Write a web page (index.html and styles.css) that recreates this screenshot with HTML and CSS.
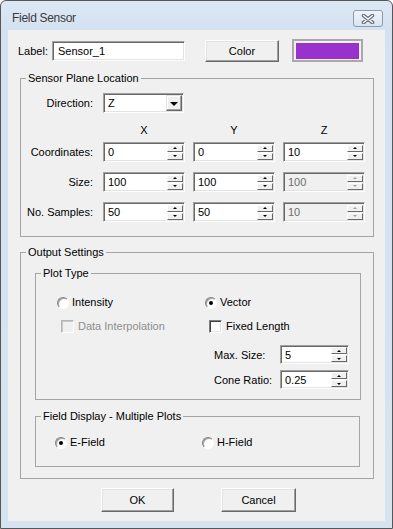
FILE: index.html
```html
<!DOCTYPE html>
<html lang="en">
<head>
  <meta charset="UTF-8" />
  <meta name="viewport" content="width=device-width, initial-scale=1.0"/>
  <title>Field Sensor</title>
  <link rel="stylesheet" href="styles.css">
</head>
<body>

<div class="window">
  <div class="titlebar">
    <span class="title">Field Sensor</span>
    <div class="close-btn">
      <svg width="14" height="10" viewBox="0 0 14 10">
        <path d="M2.5 1.5 L11.5 8.5 M11.5 1.5 L2.5 8.5" stroke="#5f6a7b" stroke-width="3.6" stroke-linecap="round"/>
        <path d="M2.5 1.5 L11.5 8.5 M11.5 1.5 L2.5 8.5" stroke="#ffffff" stroke-width="1.5" stroke-linecap="round"/>
      </svg>
    </div>
  </div>

  <div class="client">
    <div class="label-row">
      <span class="label-text">Label:</span>
      <div class="edit label-edit">Sensor_1</div>
      <div class="btn color-btn">Color</div>
      <div class="swatch"><div class="swatch-fill"></div></div>
    </div>

    <fieldset class="group plane-group">
      <legend>Sensor Plane Location</legend>

      <div class="plane-line dir-line">
        <span class="row-label">Direction:</span>
        <div class="edit combo">
          <span>Z</span>
          <div class="drop-btn"><i class="drop-arrow"></i></div>
        </div>
      </div>

      <div class="plane-line axis-line">
        <span></span>
        <span class="axis">X</span>
        <span class="axis">Y</span>
        <span class="axis">Z</span>
      </div>

      <div class="plane-line value-line first">
        <span class="row-label">Coordinates:</span>
        <div class="edit spin-edit"><span>0</span><div class="spin"><div class="spin-btn"><i class="up"></i></div><div class="spin-btn"><i class="down"></i></div></div></div>
        <div class="edit spin-edit"><span>0</span><div class="spin"><div class="spin-btn"><i class="up"></i></div><div class="spin-btn"><i class="down"></i></div></div></div>
        <div class="edit spin-edit"><span>10</span><div class="spin"><div class="spin-btn"><i class="up"></i></div><div class="spin-btn"><i class="down"></i></div></div></div>
      </div>

      <div class="plane-line value-line">
        <span class="row-label">Size:</span>
        <div class="edit spin-edit"><span>100</span><div class="spin"><div class="spin-btn"><i class="up"></i></div><div class="spin-btn"><i class="down"></i></div></div></div>
        <div class="edit spin-edit"><span>100</span><div class="spin"><div class="spin-btn"><i class="up"></i></div><div class="spin-btn"><i class="down"></i></div></div></div>
        <div class="edit spin-edit disabled"><span>100</span><div class="spin"><div class="spin-btn"><i class="up"></i></div><div class="spin-btn"><i class="down"></i></div></div></div>
      </div>

      <div class="plane-line value-line">
        <span class="row-label">No. Samples:</span>
        <div class="edit spin-edit"><span>50</span><div class="spin"><div class="spin-btn"><i class="up"></i></div><div class="spin-btn"><i class="down"></i></div></div></div>
        <div class="edit spin-edit"><span>50</span><div class="spin"><div class="spin-btn"><i class="up"></i></div><div class="spin-btn"><i class="down"></i></div></div></div>
        <div class="edit spin-edit disabled"><span>10</span><div class="spin"><div class="spin-btn"><i class="up"></i></div><div class="spin-btn"><i class="down"></i></div></div></div>
      </div>
    </fieldset>

    <fieldset class="group output-group">
      <legend>Output Settings</legend>

      <fieldset class="group plot-group">
        <legend>Plot Type</legend>
        <div class="group-body plot-body">
          <div class="choice-row">
            <label class="option"><span class="radio"></span>Intensity</label>
            <label class="option"><span class="radio checked"></span>Vector</label>
          </div>

          <div class="choice-row check-row">
            <label class="option off"><span class="check"></span>Data Interpolation</label>
            <label class="option"><span class="check"></span>Fixed Length</label>
          </div>

          <div class="param-row size-row">
            <span class="param-label">Max. Size:</span>
            <div class="edit spin-edit small"><span>5</span><div class="spin"><div class="spin-btn"><i class="up"></i></div><div class="spin-btn"><i class="down"></i></div></div></div>
          </div>

          <div class="param-row cone-row">
            <span class="param-label">Cone Ratio:</span>
            <div class="edit spin-edit small"><span>0.25</span><div class="spin"><div class="spin-btn"><i class="up"></i></div><div class="spin-btn"><i class="down"></i></div></div></div>
          </div>
        </div>
      </fieldset>

      <fieldset class="group field-group">
        <legend>Field Display - Multiple Plots</legend>
        <div class="group-body field-body">
          <div class="choice-row">
            <label class="option"><span class="radio checked"></span>E-Field</label>
            <label class="option"><span class="radio"></span>H-Field</label>
          </div>
        </div>
      </fieldset>
    </fieldset>

    <div class="actions">
      <div class="btn ok-btn">OK</div>
      <div class="btn cancel-btn">Cancel</div>
    </div>
  </div>
</div>

</body>
</html>
```

FILE: styles.css
```css
* {
  box-sizing: border-box;
}

body {
  margin: 0;
  background: #ffffff;
  font-family: "Liberation Sans", Arial, sans-serif;
  font-size: 11px;
  color: #000;
}

.window {
  width: 393px;
  height: 529px;
  border: 1px solid #575757;
  border-radius: 6px 6px 0 0;
  background: linear-gradient(#dde8f5, #d4e1f0 30px, #d6e3f1);
  display: flex;
  flex-direction: column;
}

.titlebar {
  height: 29px;
  display: flex;
  align-items: flex-start;
  justify-content: space-between;
  padding: 0 9px 0 11px;
}

.title {
  margin-top: 10px;
  font-size: 12px;
  line-height: 15px;
  letter-spacing: -0.3px;
  color: #3b3b3b;
}

.close-btn {
  width: 30px;
  height: 17px;
  margin-top: 9px;
  border: 1px solid #8c9bb0;
  border-radius: 3px;
  background: linear-gradient(#f1f5fa, #d9e3ef);
  display: flex;
  align-items: center;
  justify-content: center;
}

.client {
  margin: 0 7px;
  height: 491px;
  background: #f0f0f0;
  padding-top: 9px;
}

/* label row */

.label-row {
  display: flex;
  align-items: center;
  height: 23px;
  padding-left: 10px;
}

.label-text {
  width: 34px;
}

.edit {
  height: 20px;
  background: #fff;
  border: 1px solid;
  border-color: #a0a0a0 #fff #fff #a0a0a0;
  box-shadow: inset 1px 1px #696969, inset -1px -1px #e3e3e3;
  display: flex;
  align-items: center;
  padding-left: 4px;
}

.label-edit {
  width: 133px;
  padding-left: 5px;
}

.btn {
  height: 22px;
  background: #f0f0f0;
  border: 1px solid;
  border-color: #fff #696969 #696969 #fff;
  box-shadow: inset -1px -1px #a0a0a0, inset 1px 1px #e3e3e3;
  display: flex;
  align-items: center;
  justify-content: center;
}

.color-btn {
  width: 74px;
  margin-left: 20px;
}

.swatch {
  width: 71px;
  height: 23px;
  margin-left: 13px;
  border: 2px solid #a9a9a9;
  padding: 2px 2px 1px;
}

.swatch-fill {
  height: 100%;
  background: #9932cc;
}

/* group boxes */

.group {
  margin: 0 0 0 12px;
  padding: 0;
  width: 354px;
  min-width: 0;
  border: 1px solid #a5a5a5;
}

.group legend {
  margin-left: 5px;
  padding: 0 2px;
  line-height: 13px;
}

.plane-group {
  margin-top: 10px;
  padding-bottom: 14px;
}

.plane-line {
  display: grid;
  grid-template-columns: 74px 82px 82px 82px;
  column-gap: 8px;
  align-items: center;
}

.row-label {
  text-align: right;
  padding-right: 2px;
}

.dir-line {
  margin-top: 8px;
}

.combo {
  width: 81px;
}

.drop-btn {
  margin-left: auto;
  margin-right: 1px;
  width: 16px;
  height: 16px;
  background: #f0f0f0;
  border: 1px solid;
  border-color: #e3e3e3 #696969 #696969 #e3e3e3;
  box-shadow: inset -1px -1px #a0a0a0, inset 1px 1px #fff;
  display: flex;
  align-items: center;
  justify-content: center;
}

.drop-arrow {
  border-left: 4px solid transparent;
  border-right: 4px solid transparent;
  border-top: 4px solid #000;
  margin-top: 1px;
}

.axis-line {
  margin-top: 11px;
  line-height: 13px;
}

.axis {
  text-align: center;
}

.value-line {
  margin-top: 10px;
}

.value-line.first {
  margin-top: 5px;
}

.spin {
  margin-left: auto;
  margin-right: 1px;
  display: flex;
  flex-direction: column;
  gap: 1px;
}

.spin-btn {
  width: 16px;
  height: 7px;
  background: #f0f0f0;
  border: 1px solid;
  border-color: #fff #696969 #696969 #fff;
  display: flex;
  align-items: center;
  justify-content: center;
}

.spin-btn .up {
  border-left: 2px solid transparent;
  border-right: 2px solid transparent;
  border-bottom: 2px solid #000;
}

.spin-btn .down {
  border-left: 2px solid transparent;
  border-right: 2px solid transparent;
  border-top: 2px solid #000;
}

.edit.disabled {
  background: #f0f0f0;
  color: #6d6d6d;
}

.edit.disabled .up {
  border-bottom-color: #a0a0a0;
}

.edit.disabled .down {
  border-top-color: #a0a0a0;
}

/* output settings */

.output-group {
  margin-top: 9px;
  padding-bottom: 11px;
}

.plot-group {
  margin: 8px 0 0 14px;
  width: 326px;
}

.field-group {
  margin: 10px 0 0 14px;
  width: 325px;
}

.plot-body {
  padding: 16px 0 10px 21px;
}

.field-body {
  padding: 13px 0 17px 19px;
}

.choice-row {
  display: grid;
  grid-template-columns: 148px auto;
  align-items: center;
  height: 13px;
}

.field-body .choice-row {
  grid-template-columns: 147px auto;
}

.check-row {
  margin-top: 11px;
}

.option {
  display: flex;
  align-items: center;
  line-height: 13px;
}

.option.off {
  color: #8d8d8d;
}

.radio {
  width: 12px;
  height: 12px;
  margin-right: 3px;
  border-radius: 50%;
  border: 1px solid;
  border-color: #808080 #fff #fff #808080;
  background: #fff;
  box-shadow: inset 1px 1px #a0a0a0;
  display: flex;
  align-items: center;
  justify-content: center;
}

.radio.checked::after {
  content: "";
  width: 4px;
  height: 4px;
  border-radius: 50%;
  background: #000;
}

.check {
  width: 13px;
  height: 13px;
  margin: 0 4px 0 4px;
  border: 1px solid;
  border-color: #808080 #fff #fff #808080;
  box-shadow: inset 1px 1px #404040, inset -1px -1px #e3e3e3;
  background: #fff;
}

.option.off .check {
  border-color: #b5b5b5 #fff #fff #b5b5b5;
  box-shadow: inset 1px 1px #c8c8c8;
  background: #f0f0f0;
}

.param-row {
  display: flex;
  align-items: center;
  margin-left: 157px;
}

.param-label {
  width: 66px;
}

.size-row {
  margin-top: 12px;
}

.cone-row {
  margin-top: 6px;
}

.spin-edit.small {
  width: 69px;
  height: 19px;
}

/* dialog buttons */

.actions {
  display: flex;
  justify-content: center;
  gap: 47px;
  margin-top: 9px;
  padding-left: 4px;
}

.ok-btn {
  width: 73px;
  height: 24px;
}

.cancel-btn {
  width: 75px;
  height: 24px;
}
```
